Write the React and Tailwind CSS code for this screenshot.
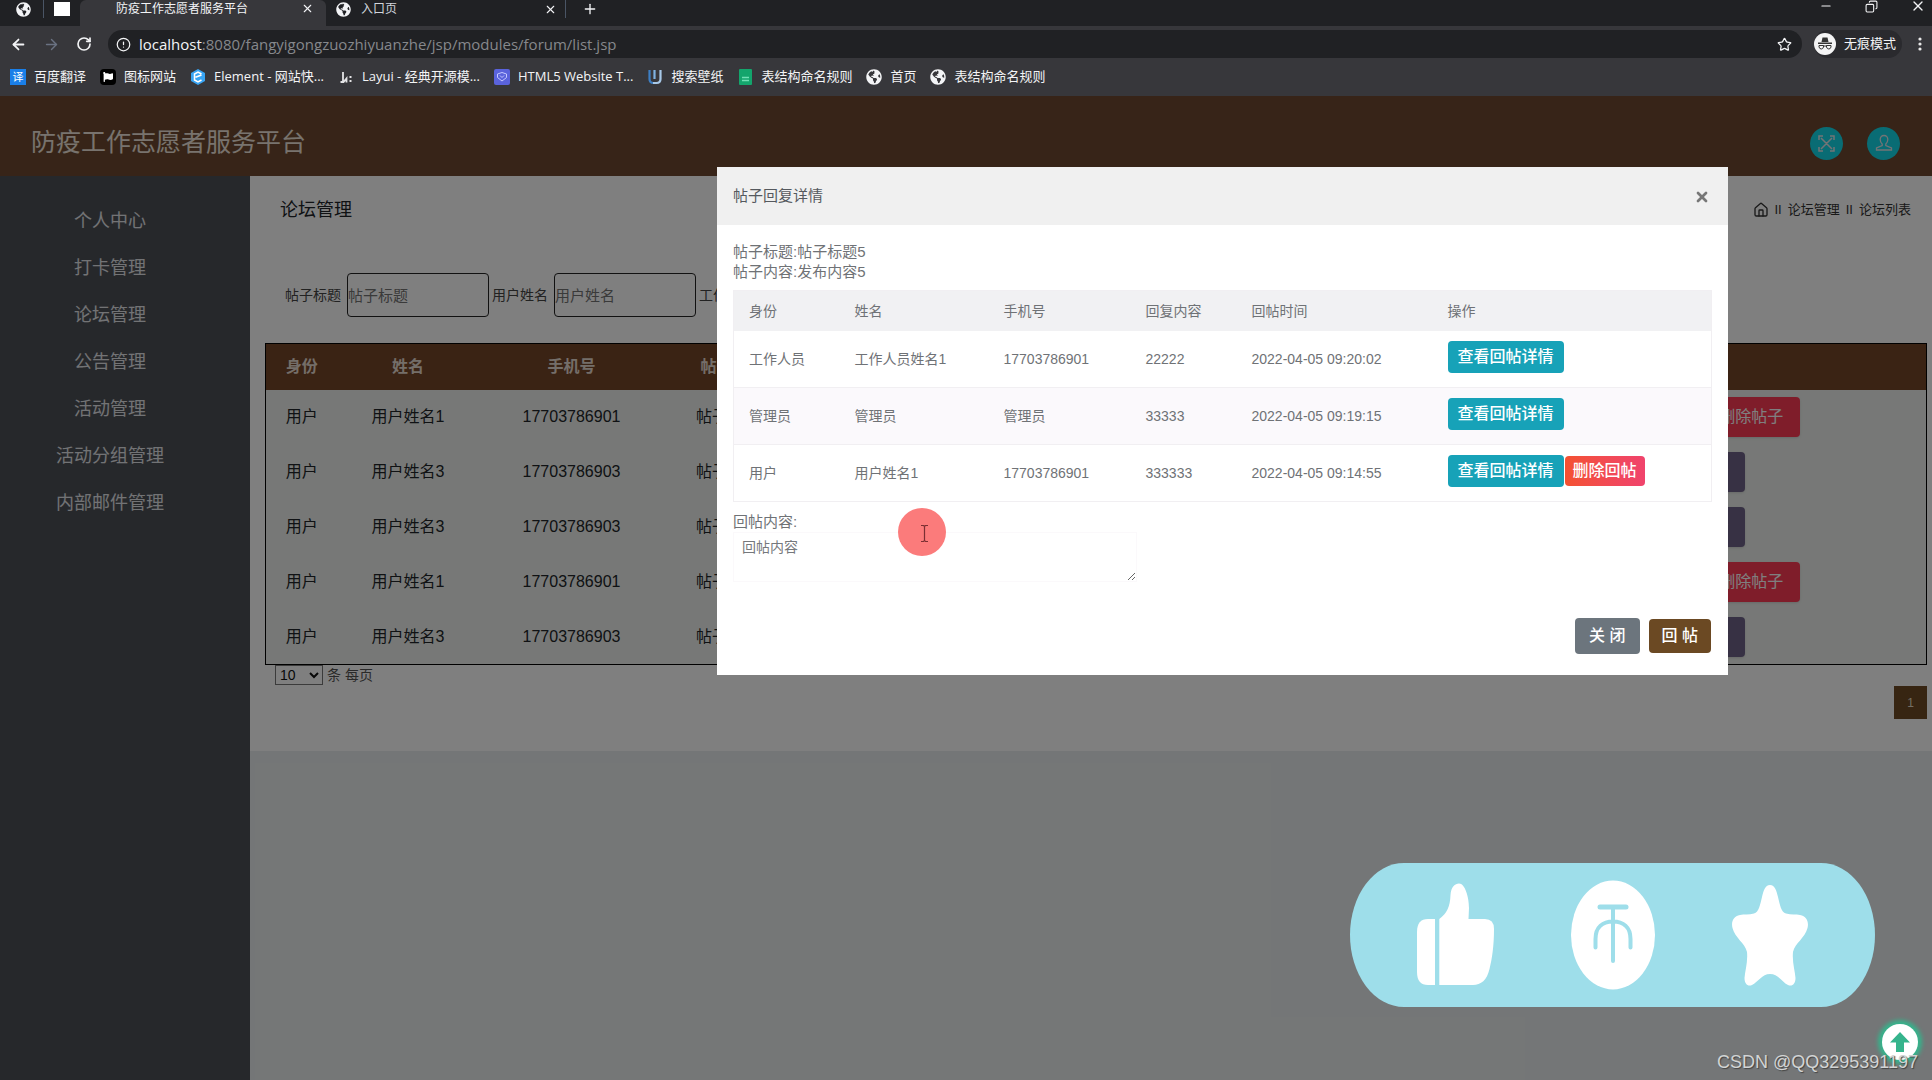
import { useState } from "react";
import { ArrowLeft, ArrowRight, RotateCw, Info, Star, X, Plus, Minus, Copy, House } from "lucide-react";
import { FaGlobeAmericas, FaFlag } from "react-icons/fa";

const bookmarks = [
  { name: "百度翻译", icon: "fanyi" },
  { name: "图标网站", icon: "flag" },
  { name: "Element - 网站快...", icon: "element" },
  { name: "Layui - 经典开源模...", icon: "layui" },
  { name: "HTML5 Website T...", icon: "html5" },
  { name: "搜索壁纸", icon: "wallpaper" },
  { name: "表结构命名规则", icon: "sheet" },
  { name: "首页", icon: "globe" },
  { name: "表结构命名规则", icon: "globe" },
];

const menus = ["个人中心", "打卡管理", "论坛管理", "公告管理", "活动管理", "活动分组管理", "内部邮件管理"];

const posts = [
  { role: "用户", name: "用户姓名1", phone: "17703786901", title: "帖子标题5", canDelete: true },
  { role: "用户", name: "用户姓名3", phone: "17703786903", title: "帖子标题4", canDelete: false },
  { role: "用户", name: "用户姓名3", phone: "17703786903", title: "帖子标题3", canDelete: false },
  { role: "用户", name: "用户姓名1", phone: "17703786901", title: "帖子标题2", canDelete: true },
  { role: "用户", name: "用户姓名3", phone: "17703786903", title: "帖子标题1", canDelete: false },
];

const replies = [
  { role: "工作人员", name: "工作人员姓名1", phone: "17703786901", content: "22222", time: "2022-04-05 09:20:02", canDelete: false },
  { role: "管理员", name: "管理员", phone: "管理员", content: "33333", time: "2022-04-05 09:19:15", canDelete: false },
  { role: "用户", name: "用户姓名1", phone: "17703786901", content: "333333", time: "2022-04-05 09:14:55", canDelete: true },
];

const BookmarkIcon = ({ type }) => {
  if (type === "fanyi") {
    return <span className="flex h-4 w-4 items-center justify-center bg-[#1a7fe8] text-[11px] leading-none text-white">译</span>;
  }
  if (type === "flag") {
    return (
      <span className="flex h-4 w-4 items-center justify-center rounded-sm bg-black text-white">
        <FaFlag size={10} />
      </span>
    );
  }
  if (type === "element") {
    return (
      <svg width="16" height="16" viewBox="0 0 16 16">
        <path d="M8 0 15 4v8l-7 4-7-4V4z" fill="#38a5f5" />
        <path d="M11.500 5 8 3 4.500 5v6L8 13l3.500-2M5.500 8.200 11.500 6" fill="none" stroke="#fff" strokeWidth="1.500" />
      </svg>
    );
  }
  if (type === "layui") {
    return (
      <svg width="16" height="16" viewBox="0 0 16 16" fill="none" stroke="#e4e4e6">
        <path d="M5 3v9M2.500 13h3l3-3.500v4" strokeWidth="1.800" />
        <path d="M12.500 7v2M12.500 11v2" strokeWidth="2" />
      </svg>
    );
  }
  if (type === "html5") {
    return (
      <svg width="16" height="16" viewBox="0 0 16 16">
        <rect width="16" height="16" rx="2" fill="#5a63dc" />
        <path d="m3.500 5 4.500-1.500L12.500 5v3.500L8 12 3.500 8.500z" fill="none" stroke="#c5c9ff" />
        <path d="m6 6.500 2 2 2-2" fill="none" stroke="#c5c9ff" />
      </svg>
    );
  }
  if (type === "wallpaper") {
    return (
      <svg width="16" height="16" viewBox="0 0 16 16" fill="none" strokeWidth="2.200">
        <path d="M2.500 1v9q0 4 4 4h3" stroke="#3d7fc4" />
        <path d="M7.500 1v9" stroke="#7fb2e2" />
        <path d="M6 14h3.500q4 0 4-4V1" stroke="#a7c8e8" />
      </svg>
    );
  }
  if (type === "sheet") {
    return (
      <svg width="16" height="16" viewBox="0 0 16 16">
        <rect x="2" width="13" height="16" rx="1" fill="#13a56c" />
        <path d="M5 8.500h7M5 11.500h7" stroke="#6fe0b4" strokeWidth="1.500" />
      </svg>
    );
  }
  return <FaGlobeAmericas size={16} className="text-gray-100" />;
};

const Browser = () => {
  return (
    <div className="bg-[#37373b] font-['Open_Sans','Noto_Sans_CJK_SC',sans-serif] text-xs text-gray-100">
      {/* tabs */}
      <div className="flex h-[26px] items-start overflow-hidden bg-[#202124]">
        <div className="flex h-[18px] w-[44px] items-center justify-center border-r border-gray-600 pl-1">
          <FaGlobeAmericas size={15} />
        </div>
        <div className="flex h-[18px] w-9 items-center justify-center">
          <span className="h-3.5 w-4 bg-white"></span>
        </div>
        <div className="flex h-[26px] w-[246px] items-start justify-between rounded-t-md bg-[#37373b] pl-9 pr-3">
          <span className="leading-[18px]">防疫工作志愿者服务平台</span>
          <button aria-label="关闭标签页" className="mt-0.5"><X size={13} /></button>
        </div>
        <div className="flex h-[18px] w-[240px] items-center border-r border-gray-600 pl-2.5 pr-2">
          <FaGlobeAmericas size={15} />
          <span className="ml-2.5 flex-1 text-gray-300">入口页</span>
          <button aria-label="关闭标签页"><X size={13} /></button>
        </div>
        <button aria-label="新标签页" className="ml-4 h-[18px]"><Plus size={16} /></button>
        <div className="ml-auto flex h-[12px] items-center gap-8 pr-1.5">
          <Minus size={14} />
          <Copy size={13} className="-scale-x-100" />
          <X size={16} />
        </div>
      </div>

      {/* address bar */}
      <div className="flex h-9 items-center pl-2.5 pr-2.5">
        <button aria-label="后退"><ArrowLeft size={17} strokeWidth={2.5} /></button>
        <button aria-label="前进" className="ml-4 text-gray-500"><ArrowRight size={17} /></button>
        <button aria-label="刷新" className="ml-4"><RotateCw size={16} strokeWidth={2.5} /></button>
        <div className="ml-4 flex h-7 flex-1 items-center rounded-full bg-[#202124] pl-2 pr-2.5">
          <Info size={15} className="rotate-180 -scale-x-100" />
          <p className="ml-2 text-[15px] text-[#86888c]">
            <span className="text-gray-100">localhost</span>:8080/fangyigongzuozhiyuanzhe/jsp/modules/forum/list.jsp
          </p>
          <Star size={15} className="ml-auto" />
        </div>
        <div className="ml-3 flex h-7 items-center rounded-full bg-[#2a2a2e] pr-1.5">
          <svg width="22" height="22" viewBox="0 0 22 22">
            <circle cx="11" cy="11" r="11" fill="#f4f4f5" />
            <path d="M7.500 9 8.500 4.500h5l1 4.500zM4 9.500h14v1.500H4z" fill="#333" />
            <path d="M5 12.500h4.500v1.500q-.5 2-2.200 2T5 14zm7.500 0H17V14q-.5 2-2.200 2t-2.300-2zM9 13h4" fill="none" stroke="#333" />
          </svg>
          <span className="ml-2 text-[13px]">无痕模式</span>
        </div>
        <svg width="4" height="16" viewBox="0 0 4 16" fill="#e8e8e8" className="ml-4">
          <circle cx="2" cy="3" r="1.600" />
          <circle cx="2" cy="8" r="1.600" />
          <circle cx="2" cy="13" r="1.600" />
        </svg>
      </div>

      {/* bookmarks */}
      <div className="flex h-[34px] items-center gap-3.5 pb-1 pl-2.5 text-[13px]">
        {bookmarks.map((item, index) => (
          <a href="#" key={index} className="flex items-center gap-2 whitespace-nowrap">
            <BookmarkIcon type={item.icon} />
            <span>{item.name}</span>
          </a>
        ))}
      </div>
    </div>
  );
};

const PostTable = () => {
  return (
    <table className="w-full table-fixed border border-black text-center text-base text-[#212529]">
      <colgroup>
        <col className="w-[72px]" />
        <col className="w-[141px]" />
        <col className="w-[186px]" />
        <col className="w-[136px]" />
        <col />
        <col className="w-[460px]" />
      </colgroup>
      <thead>
        <tr className="h-[46px] bg-[#744628] text-[#e8dcd2]">
          <th>身份</th>
          <th>姓名</th>
          <th>手机号</th>
          <th>帖子标题</th>
          <th></th>
          <th>操作</th>
        </tr>
      </thead>
      <tbody className="bg-[#eef1ee]">
        {posts.map((post, index) => (
          <tr key={index} className="h-[55px]">
            <td>{post.role}</td>
            <td>{post.name}</td>
            <td>{post.phone}</td>
            <td>{post.title}</td>
            <td></td>
            <td>
              <div className="flex justify-center gap-3">
                <button className="h-10 rounded bg-[#6f6288] px-[17px] text-white shadow">查看详情</button>
                {post.canDelete && (
                  <button className="h-10 rounded bg-[#ff3a55] px-[17px] text-white shadow">删除帖子</button>
                )}
              </div>
            </td>
          </tr>
        ))}
      </tbody>
    </table>
  );
};

const ReplyModal = ({ onClose }) => {
  const [reply, setReply] = useState("");

  return (
    <div className="absolute inset-0 flex items-start justify-end bg-black/50 pr-[204px] pt-[71px]">
      <div role="dialog" className="relative w-[1011px] bg-white text-[15px] text-[#6f7276]">
        <div className="flex h-[58px] items-center justify-between bg-[#f0f0f0] px-4">
          <h5 className="text-[#55595e]">帖子回复详情</h5>
          <button onClick={onClose} aria-label="关闭" className="px-0.5 pt-0.5 text-[#777]">
            <X size={16} strokeWidth={4} />
          </button>
        </div>

        <div className="px-4 pt-[17px]">
          <p className="leading-5">帖子标题:帖子标题5</p>
          <p className="leading-5">帖子内容:发布内容5</p>

          <table className="mt-2 w-full table-fixed border border-[#f1eff2] text-left text-sm">
            <colgroup>
              <col className="w-[106px]" />
              <col className="w-[149px]" />
              <col className="w-[142px]" />
              <col className="w-[106px]" />
              <col className="w-[196px]" />
              <col />
            </colgroup>
            <thead>
              <tr className="h-10 bg-[#f1f1f3]">
                <th className="pl-[15px] font-normal">身份</th>
                <th className="pl-[15px] font-normal">姓名</th>
                <th className="pl-[15px] font-normal">手机号</th>
                <th className="pl-[15px] font-normal">回复内容</th>
                <th className="pl-[15px] font-normal">回帖时间</th>
                <th className="pl-[15px] font-normal">操作</th>
              </tr>
            </thead>
            <tbody>
              {replies.map((item, index) => (
                <tr key={index} className="h-[57px] border-b border-[#f1eff2] even:bg-[#fbf9fc]">
                  <td className="pl-[15px]">{item.role}</td>
                  <td className="pl-[15px]">{item.name}</td>
                  <td className="pl-[15px]">{item.phone}</td>
                  <td className="pl-[15px]">{item.content}</td>
                  <td className="pl-[15px]">{item.time}</td>
                  <td className="pb-1 pl-[15px]">
                    <div className="flex items-center gap-px text-base font-medium text-white">
                      <button className="h-8 rounded-sm bg-[#17a2b8] px-[10px]">查看回帖详情</button>
                      {item.canDelete && (
                        <button className="h-[30px] rounded-sm bg-linear-to-r from-[#f4512f] to-[#f0436c] px-2">删除回帖</button>
                      )}
                    </div>
                  </td>
                </tr>
              ))}
            </tbody>
          </table>

          <label htmlFor="reply" className="mt-2.5 block leading-5">回帖内容:</label>
          <textarea
            id="reply"
            rows="2"
            placeholder="回帖内容"
            value={reply}
            onChange={(e) => setReply(e.target.value)}
            className="block h-[50px] w-[404px] border border-[#fbf9fb] px-2 py-1 text-sm placeholder:text-[#75787c]"
          />
        </div>

        <div className="flex items-center justify-end gap-[9px] px-[17px] pb-[21px] pt-9 text-base font-medium text-white">
          <button onClick={onClose} className="h-9 rounded bg-[#6c757d] px-3.5">关 闭</button>
          <button className="h-[34px] rounded-sm bg-[#6b4923] px-[13px]">回 帖</button>
        </div>

        {/* mouse pointer */}
        <svg width="48" height="48" viewBox="0 0 48 48" className="absolute left-[181px] top-[341px]">
          <circle cx="24" cy="24" r="24" fill="#fb7b7b" />
          <path d="M23 17.500h2.500l1 1 1-1H30M23 33.500h2.500l1-1 1 1H30M26.500 18v15" fill="none" stroke="#7a2f33" strokeWidth="1.200" />
        </svg>
      </div>
    </div>
  );
};

const LikeBar = () => {
  return (
    <svg width="525" height="144" viewBox="0 0 525 144" className="absolute bottom-[73px] right-[57px]">
      <rect width="525" height="144" rx="54" ry="72" fill="#9edeea" />
      <g fill="#fff">
        {/* thumb */}
        <path d="M85 56v66h-7q-11 0-11-13V69q0-13 11-13z" />
        <path d="M89.300 56C97 50 100 44 100.500 32C101 24 105 20.500 109 20.500C115 20.500 119 34 119 45L118.500 56H135Q144 56 144 66C144 83 142 96 139.500 106C137 117 131 122 123 122H89.300Z" />
        {/* coin */}
        <ellipse cx="263" cy="72" rx="42" ry="54.500" />
        {/* star */}
        <path d="M420 22C425 22 426.500 28 428 34C430 42 431 49 436 50.500C441 52 446 51 450 52C457 53.500 459 59 457.500 65C455 75 445 80 443 89C442 99 445 108 445.500 115C445.500 121 442 124 438 122C432 119 428 111 420 111C412 111 408 119 402 122C398 124 394.500 121 394.500 115C395 108 398 99 397 89C395 80 385 75 382.500 65C381 59 383 53.500 390 52C394 51 399 52 404 50.500C409 49 410 42 412 34C413.500 28 415 22 420 22Z" />
      </g>
      <g fill="none" stroke="#9edeea" strokeLinecap="round">
        <path d="M250 44h26" strokeWidth="5" />
        <path d="M263 46v52M245.500 84.500V76C245.500 64 253 58.500 263 58.500C273 58.500 280.500 64 280.500 76V84.500" strokeWidth="4" />
      </g>
    </svg>
  );
};

const App = () => {
  const [isOpen, setIsOpen] = useState(true);
  const [pageSize, setPageSize] = useState("10");

  return (
    <div className="flex min-h-screen flex-col">
      <Browser />

      <div className="relative flex flex-1 flex-col overflow-hidden bg-[#e9edee] font-['Liberation_Sans','Noto_Sans_CJK_SC',sans-serif]">
        <header className="flex h-20 items-center justify-between bg-[#6e4930] pl-[31px] pr-8 pt-3.5">
          <h1 className="text-[25px] text-[#f0e6dc]">防疫工作志愿者服务平台</h1>
          <div className="flex gap-6">
            <button aria-label="全屏" className="flex h-[33px] w-[33px] items-center justify-center rounded-full bg-[#12d8e8] text-gray-200">
              <svg width="17" height="17" viewBox="0 0 17 17" fill="none" stroke="currentColor" strokeWidth="1.500">
                <path d="M3 3l11 11M14 3 3 14M1 5V1h4M12 1h4v4M16 12v4h-4M5 16H1v-4" />
              </svg>
            </button>
            <button aria-label="用户" className="flex h-[33px] w-[33px] items-center justify-center rounded-full bg-[#12d8e8] text-gray-200">
              <svg width="18" height="18" viewBox="0 0 18 18" fill="none" stroke="currentColor" strokeWidth="1.300">
                <path d="M9 1.500c-2.500 0-3.800 1.700-3.800 4 0 2 .9 3.600 2 4.500v1.500L1.500 14v2h15v-2l-5.700-2.500V10c1.100-.9 2-2.500 2-4.500 0-2.300-1.300-4-3.800-4z" />
              </svg>
            </button>
          </div>
        </header>

        <div className="flex flex-1">
          <aside className="w-[250px] shrink-0 bg-[#4d5057] pt-[22px]">
            <ul className="w-[220px] text-center text-lg text-[#e4e6ea]">
              {menus.map((menu) => (
                <li key={menu}>
                  <a href="#" className="block py-2.5 leading-[27px]">{menu}</a>
                </li>
              ))}
            </ul>
          </aside>

          <main className="min-w-0 flex-1">
            <div className="bg-white pb-8 pl-[15px] pr-[5px] pt-[21px]">
              <div className="flex items-center justify-between pl-[15px] pr-4">
                <h3 className="text-lg leading-[26px] text-[#212529]">论坛管理</h3>
                <nav className="flex items-center gap-1.5 text-[13px] text-[#333]">
                  <House size={16} />
                  <span>II</span>
                  <a href="#">论坛管理</a>
                  <span>II</span>
                  <span>论坛列表</span>
                </nav>
              </div>

              {/* search */}
              <form className="mt-[50px] flex items-center gap-[3px] pl-5 text-sm text-[#444]">
                {["帖子标题", "用户姓名", "工作人员姓名"].map((label) => (
                  <label key={label} className="flex items-center gap-[6px] whitespace-nowrap">
                    {label}
                    <input
                      type="text"
                      placeholder={label}
                      className="h-11 w-[142px] rounded-sm border border-[#222] text-[15px] placeholder:text-[#757575]"
                    />
                  </label>
                ))}
              </form>

              <div className="mt-[26px]">
                <PostTable />
              </div>

              <div className="flex items-start justify-between pl-2.5">
                <label className="flex items-center gap-1 text-sm text-[#555]">
                  <select
                    value={pageSize}
                    onChange={(e) => setPageSize(e.target.value)}
                    className="h-5 w-12 border border-[#767676] bg-white text-[#111]"
                  >
                    <option>10</option>
                    <option>25</option>
                    <option>50</option>
                  </select>
                  条 每页
                </label>
                <button className="mt-[21px] h-[33px] w-[33px] bg-[#6e4a24] text-xs text-[#e8dcc8]">1</button>
              </div>
            </div>
          </main>
        </div>

        {isOpen && <ReplyModal onClose={() => setIsOpen(false)} />}

        <LikeBar />

        {/* back to top */}
        <button
          aria-label="返回顶部"
          className="absolute bottom-5 right-[14px] flex h-9 w-9 items-center justify-center rounded-full bg-white shadow-[0_0_4px_4px_#35b48c]"
        >
          <svg width="20" height="20" viewBox="0 0 20 20" fill="#35b48c">
            <path d="m10 0 10 10.500h-6V20H6v-9.500H0z" />
          </svg>
        </button>
        <p className="absolute bottom-[5px] right-[14px] text-lg leading-[26px] text-[#d2d4d4] text-shadow-[1px_1px_1px_#444]">
          CSDN @QQ3295391197
        </p>
      </div>
    </div>
  );
};

export default App;
